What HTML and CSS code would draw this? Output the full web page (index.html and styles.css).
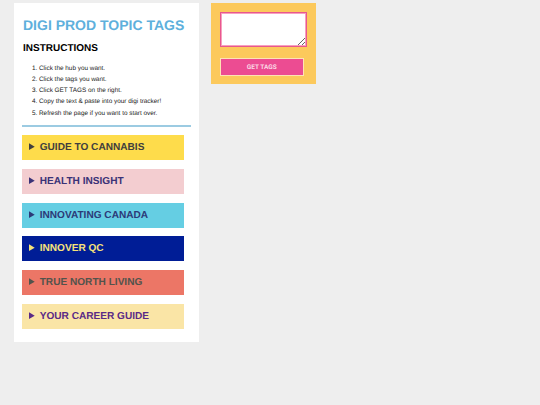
FILE: index.html
```html
<!DOCTYPE html>
<html lang="en">
<head>
  <meta charset="UTF-8">
  <meta name="viewport" content="width=device-width, initial-scale=1.0">
  <title>Digi Prod Topic Tags</title>
  <link rel="stylesheet" href="styles.css">
</head>
<body>
  <div class="page">
    <section class="hubs">
      <h1>DIGI PROD TOPIC TAGS</h1>
      <h2>INSTRUCTIONS</h2>
      <ol>
        <li>Click the hub you want.</li>
        <li>Click the tags you want.</li>
        <li>Click GET TAGS on the right.</li>
        <li>Copy the text &amp; paste into your digi tracker!</li>
        <li>Refresh the page if you want to start over.</li>
      </ol>
      <hr>
      <details class="hub cannabis"><summary>GUIDE TO CANNABIS</summary></details>
      <details class="hub health"><summary>HEALTH INSIGHT</summary></details>
      <details class="hub canada"><summary>INNOVATING CANADA</summary></details>
      <details class="hub qc"><summary>INNOVER QC</summary></details>
      <details class="hub north"><summary>TRUE NORTH LIVING</summary></details>
      <details class="hub career"><summary>YOUR CAREER GUIDE</summary></details>
    </section>
    <section class="output">
      <textarea></textarea>
      <button type="button">GET TAGS</button>
    </section>
  </div>
</body>
</html>
```

FILE: styles.css
```css
body {
  margin: 0;
  background-color: #eeeeee;
  font-family: "Liberation Sans", Arial, sans-serif;
  text-rendering: geometricPrecision;
}

.page {
  display: flex;
  align-items: flex-start;
  gap: 12px;
  padding: 3px 0 0 14px;
}

.hubs {
  width: 185px;
  height: 338.5px;
  box-sizing: border-box;
  padding: 13px 8px 0;
  background-color: #ffffff;
}

h1 {
  margin: 0 0 0 1px;
  font-size: 14px;
  line-height: 18px;
  color: #5eb0dc;
}

h2 {
  margin: 9px 0 0 1px;
  font-size: 10px;
  line-height: 12px;
  color: #000000;
}

ol {
  margin: 7.5px 0 0;
  padding-left: 17px;
  font-size: 6.4px;
  line-height: 11.25px;
  color: #222222;
}

hr {
  height: 2px;
  margin: 6.5px 0 8px;
  border: 0;
  background-color: #9ccbe2;
}

.hub {
  width: 161.5px;
  margin-bottom: 8.7px;
}

.hub summary {
  height: 25px;
  padding-left: 7px;
  font-size: 10.1px;
  font-weight: bold;
  line-height: 26px;
}

.cannabis summary { background-color: #fedc4b; color: #413f3e; }
.health summary { background-color: #f3cdd0; color: #3a3277; }
.canada summary { background-color: #65cee3; color: #2c3a78; }
.qc summary { background-color: #001d96; color: #f6e27a; }
.north summary { background-color: #ec7666; color: #52534c; }
.career summary { background-color: #fae5a6; color: #5a2a86; }

.output {
  display: flex;
  flex-direction: column;
  align-items: flex-start;
  width: 105px;
  height: 80.5px;
  box-sizing: border-box;
  padding: 9px 8.5px 0;
  background-color: #fcc95c;
}

textarea {
  width: 87.5px;
  height: 35px;
  box-sizing: border-box;
  margin: 0;
  border: 1px solid #e8578f;
  outline: 1px solid #f7a0bd;
  outline-offset: -2px;
  background-color: #ffffff;
}

button {
  width: 84.5px;
  height: 17.5px;
  margin-top: 11px;
  padding: 0;
  border: 1px solid #fde3b4;
  background-color: #ec4c92;
  color: #fbd8e4;
  font-family: Roboto, sans-serif;
  font-size: 6.5px;
  font-weight: bold;
  text-rendering: geometricPrecision;
}
```
